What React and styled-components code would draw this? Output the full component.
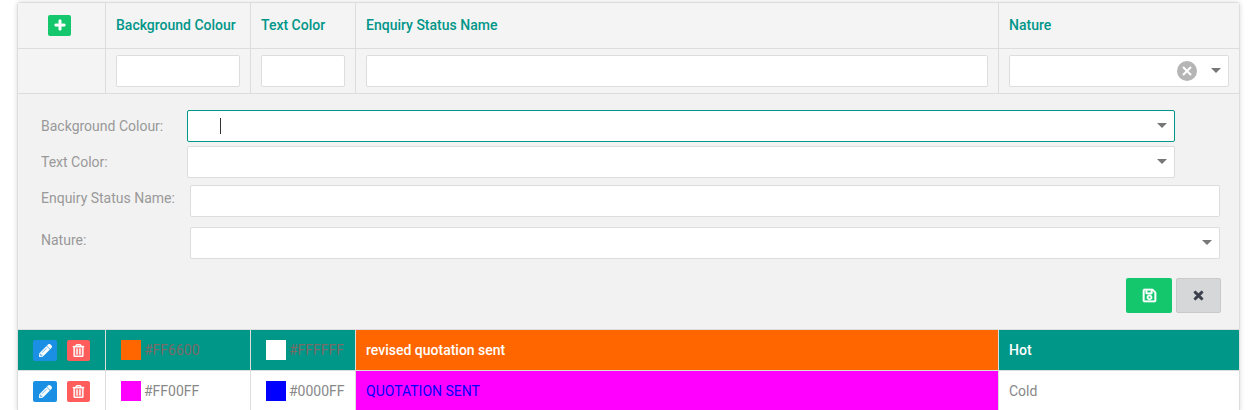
import React from 'react';
import styled, { createGlobalStyle } from 'styled-components';
import { FaPlus, FaPencilAlt, FaRegTrashAlt, FaRegSave, FaTimes } from 'react-icons/fa';

const GlobalStyle = createGlobalStyle`
    html, body {
        margin: 0;
        background: #fff;
        overflow: hidden;
    }
    body {
        font-family: Roboto, "Liberation Sans", sans-serif;
        font-size: 14px;
        color: #888;
    }
    * {
        box-sizing: border-box;
    }
`;

const Page = styled.div`
    width: 1256px;
    height: 410px;
    padding: 2px 16px 0 17px;
    overflow: hidden;
`;

const GridWrapper = styled.div`
    width: 1223px;
    border: 1px solid #ddd;
    border-bottom: 0;
    border-radius: 4px 4px 0 0;
    box-shadow: 0 0 5px rgba(0, 0, 0, 0.15);
    background: #fff;
`;

const Row = styled.div`
    display: grid;
    grid-template-columns: 88px 145px 105px 643px 241px;
    height: ${(p) => p.$height}px;
    background: ${(p) => p.$bg || '#fff'};
    border-bottom: 1px solid #ddd;
`;

const Cell = styled.div`
    display: flex;
    align-items: center;
    padding: 0 10px;
    min-width: 0;
    white-space: nowrap;
    background: ${(p) => p.$bg || 'transparent'};
    color: ${(p) => p.$color || 'inherit'};
    font-weight: ${(p) => p.$weight || 400};
    border-right: ${(p) => (p.$last ? '0' : '1px solid #ddd')};
`;

const HeaderCell = styled(Cell)`
    color: #009688;
    font-weight: 500;
    padding-bottom: 1px;
`;

const IconCell = styled(Cell)`
    justify-content: center;
    padding: 0 4px 0 0;
`;

const AddButton = styled.span`
    display: flex;
    align-items: center;
    justify-content: center;
    width: 23px;
    height: 21px;
    margin-top: -1px;
    border-radius: 2px;
    background: #14c76d;
    color: #fff;
    font-size: 12px;

    svg {
        stroke: currentColor;
        stroke-width: 30;
    }
`;

const FilterInput = styled.div`
    flex: 1;
    height: 32px;
    background: #fff;
    border: 1px solid #ddd;
    border-radius: 2px;
`;

const FilterSelect = styled(FilterInput)`
    display: flex;
    align-items: center;
    justify-content: flex-end;
    padding-right: 7px;
`;

const SelectCell = styled(Cell)`
    padding-right: 11px;
`;

const ClearIcon = styled.span`
    display: flex;
    margin-right: 14px;
`;

const Caret = styled.span`
    width: 0;
    height: 0;
    margin-bottom: 1px;
    border-left: 5px solid transparent;
    border-right: 5px solid transparent;
    border-top: 5px solid #777;
`;

const EditForm = styled.div`
    height: 236px;
    padding: 16px 18px 0 23px;
    background: #f2f2f2;
    border-bottom: 1px solid #ddd;
`;

const FormRow = styled.div`
    display: flex;
    align-items: flex-start;
    margin-bottom: ${(p) => p.$gap}px;
`;

const FormLabel = styled.label`
    width: ${(p) => p.$width}px;
    flex: none;
    padding-top: ${(p) => p.$top}px;
    line-height: 16px;
    color: #999;
`;

const FormInput = styled.div`
    display: flex;
    align-items: center;
    justify-content: flex-end;
    width: ${(p) => p.$width}px;
    height: 32px;
    padding-right: 7px;
    background: #fff;
    border: 1px solid ${(p) => (p.$focused ? '#009688' : '#ddd')};
    border-radius: 2px;
    position: relative;
`;

const TextCursor = styled.span`
    position: absolute;
    left: 32px;
    top: 7px;
    width: 1px;
    height: 16px;
    background: #333;
`;

const FormActions = styled.div`
    display: flex;
    justify-content: flex-end;
    gap: 4px;
    margin-top: 19px;
`;

const SaveButton = styled.button`
    display: flex;
    align-items: center;
    justify-content: center;
    width: 46px;
    height: 35px;
    padding: 0;
    background: #14c76d;
    color: #fff;
    border: 0;
    border-radius: 2px;
    font-size: 15px;

    svg {
        stroke: currentColor;
        stroke-width: 20;
    }
`;

const CancelButton = styled(SaveButton)`
    width: 45px;
    background: #d6d7d9;
    color: #3a3f4b;
    border: 1px solid #c8c9cb;
    font-size: 13px;

    svg {
        stroke-width: 30;
    }
`;

const ActionCell = styled(Cell)`
    justify-content: center;
    gap: 10px;
    padding: 0;
`;

const ActionButton = styled.span`
    display: flex;
    align-items: center;
    justify-content: center;
    width: ${(p) => p.$width}px;
    height: 21px;
    border-radius: 2px;
    background: ${(p) => p.$bg};
    color: #fff;
    font-size: 13px;

    svg {
        stroke: currentColor;
        stroke-width: 16;
    }
`;

const Swatch = styled.span`
    width: 20px;
    height: 20px;
    flex: none;
    margin-left: 5px;
    margin-right: 3px;
    background: ${(p) => p.$color};
`;

const COLUMNS = ['Background Colour', 'Text Color', 'Enquiry Status Name', 'Nature'];

const ROWS = [
    { id: 1, background: '#FF6600', text: '#FFFFFF', name: 'revised quotation sent', nature: 'Hot', selected: true },
    { id: 2, background: '#FF00FF', text: '#0000FF', name: 'QUOTATION SENT', nature: 'Cold' },
];

function ClearCircle() {
    return (
        <svg width="20" height="20" viewBox="0 0 20 20">
            <circle cx="10" cy="10" r="10" fill="#b5b5b5" />
            <path d="M6 6l8 8M14 6l-8 8" stroke="#fff" strokeWidth="2" />
        </svg>
    );
}

function DataRow({ row }) {
    const codeColor = row.selected ? '#7b6a66' : '#888';
    return (
        <Row $height={41} $bg={row.selected ? '#009688' : '#fff'}>
            <ActionCell>
                <ActionButton $width={24} $bg="#1b8fe3"><FaPencilAlt /></ActionButton>
                <ActionButton $width={23} $bg="#ff5c5c"><FaRegTrashAlt /></ActionButton>
            </ActionCell>
            <Cell $color={codeColor}><Swatch $color={row.background} />{row.background}</Cell>
            <Cell $color={codeColor}><Swatch $color={row.text} />{row.text}</Cell>
            <Cell
                $bg={row.background}
                $color={row.text}
                $weight={row.selected ? 500 : 400}
            >
                {row.name}
            </Cell>
            <Cell
                $last
                $color={row.selected ? '#fff' : '#888'}
                $weight={row.selected ? 500 : 400}
            >
                {row.nature}
            </Cell>
        </Row>
    );
}

export default function App() {
    return (
        <Page>
            <GlobalStyle />
            <GridWrapper>
                <Row $height={46} $bg="#f4f4f4">
                    <IconCell><AddButton><FaPlus /></AddButton></IconCell>
                    {COLUMNS.map((name, i) => (
                        <HeaderCell key={name} $last={i === COLUMNS.length - 1}>{name}</HeaderCell>
                    ))}
                </Row>
                <Row $height={45} $bg="#f4f4f4">
                    <Cell />
                    <Cell><FilterInput /></Cell>
                    <Cell><FilterInput /></Cell>
                    <Cell><FilterInput /></Cell>
                    <SelectCell $last>
                        <FilterSelect>
                            <ClearIcon><ClearCircle /></ClearIcon>
                            <Caret />
                        </FilterSelect>
                    </SelectCell>
                </Row>
                <EditForm>
                    <FormRow $gap={4}>
                        <FormLabel $width={146} $top={8}>Background Colour:</FormLabel>
                        <FormInput $width={988} $focused>
                            <TextCursor />
                            <Caret />
                        </FormInput>
                    </FormRow>
                    <FormRow $gap={7}>
                        <FormLabel $width={146} $top={8}>Text Color:</FormLabel>
                        <FormInput $width={988}><Caret /></FormInput>
                    </FormRow>
                    <FormRow $gap={10}>
                        <FormLabel $width={149} $top={5}>Enquiry Status Name:</FormLabel>
                        <FormInput $width={1030} />
                    </FormRow>
                    <FormRow>
                        <FormLabel $width={149} $top={5}>Nature:</FormLabel>
                        <FormInput $width={1030}><Caret /></FormInput>
                    </FormRow>
                    <FormActions>
                        <SaveButton><FaRegSave /></SaveButton>
                        <CancelButton><FaTimes /></CancelButton>
                    </FormActions>
                </EditForm>
                {ROWS.map((row) => <DataRow key={row.id} row={row} />)}
            </GridWrapper>
        </Page>
    );
}
